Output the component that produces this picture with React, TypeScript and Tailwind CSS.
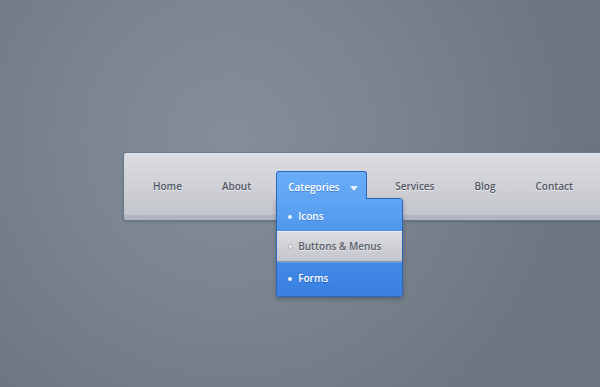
const items = ["Home", "About"];
const rightItems = ["Services", "Blog", "Contact"];

const NavLink = ({ label }: { label: string }) => (
  <a className="px-[20px] pt-[3px] text-[10px] font-semibold text-[#525764] [text-shadow:0_1px_0_rgba(255,255,255,0.6)]">
    {label}
  </a>
);

const Bullet = ({ grey }: { grey?: boolean }) => (
  <span
    className={
      grey
        ? "w-[5px] h-[5px] rounded-full bg-[#eef0f3] border border-[#b0b4bb] mr-[5px]"
        : "w-[4px] h-[4px] rounded-full bg-[#e9f1fc] mr-[6px]"
    }
  />
);

export default function App() {
  return (
    <div
      className="w-[600px] h-[387px] overflow-hidden bg-[radial-gradient(circle_at_230px_140px,#848e99_0%,#7b8590_35%,#6b757f_80%)] pt-[152px] pl-[123px]"
      style={{ fontFamily: '"Open Sans", "Liberation Sans", sans-serif' }}
    >
      {/* nav bar */}
      <div className="w-[520px] h-[69px] border border-r-0 border-[#687a8f] rounded-l-[3px] bg-[linear-gradient(#e6e7ea_0px,#dbdce1_2px,#c4c6cd_62px,#b2b5bd_62px,#b2b5bd_67px)] shadow-[0_1px_2px_rgba(40,50,60,0.25)] flex items-start pt-[18px]">
        <div className="flex items-center h-[28px] pl-[9px]">
          {items.map((i) => (
            <NavLink key={i} label={i} />
          ))}

          <div className="relative ml-[5px] mr-[8px] self-start">
            {/* tab */}
            <div className="relative z-10 h-[28px] w-[91px] border border-b-0 border-[#2e66bf] rounded-t-[3px] bg-[linear-gradient(#68adf7,#5fa5f3)] flex items-center pl-[11px] pt-[3px]">
              <span className="text-[10px] font-semibold text-white [text-shadow:0_1px_0_rgba(30,80,160,0.45)]">
                Categories
              </span>
              <svg width="8" height="5" viewBox="0 0 8 5" className="ml-[11px] mt-[2px]">
                <path d="M0 0 H8 L4 5 Z" fill="#e8f0fb" />
              </svg>
            </div>

            {/* dropdown */}
            <div className="absolute top-[27px] left-0 w-[127px] border border-[#2e66bf] rounded-b-[3px] rounded-tr-[3px] overflow-hidden shadow-[0_2px_4px_rgba(30,40,60,0.35)]">
              <div className="h-[33px] bg-[linear-gradient(#5fa5f3,#4f97ed)] border-b border-[#e9eef5] flex items-center pl-[11px] pt-[3px]">
                <Bullet />
                <span className="text-[10px] font-semibold text-white [text-shadow:0_1px_0_rgba(30,80,160,0.45)]">
                  Icons
                </span>
              </div>
              <div className="h-[30px] bg-[linear-gradient(#dcdde2,#c3c5cc)] border-b border-[#8f95a1] flex items-center pl-[11px]">
                <Bullet grey />
                <span className="text-[10px] font-semibold text-[#585c67] [text-shadow:0_1px_0_rgba(255,255,255,0.6)]">
                  Buttons &amp; Menus
                </span>
              </div>
              <div className="h-[34px] bg-[linear-gradient(#4289e6,#3a80e0)] border-t border-[#5b9aeb] flex items-center pl-[11px] pb-[2px]">
                <Bullet />
                <span className="text-[10px] font-semibold text-white [text-shadow:0_1px_0_rgba(20,60,140,0.5)]">
                  Forms
                </span>
              </div>
            </div>
          </div>

          {rightItems.map((i) => (
            <NavLink key={i} label={i} />
          ))}
        </div>
      </div>
    </div>
  );
}
